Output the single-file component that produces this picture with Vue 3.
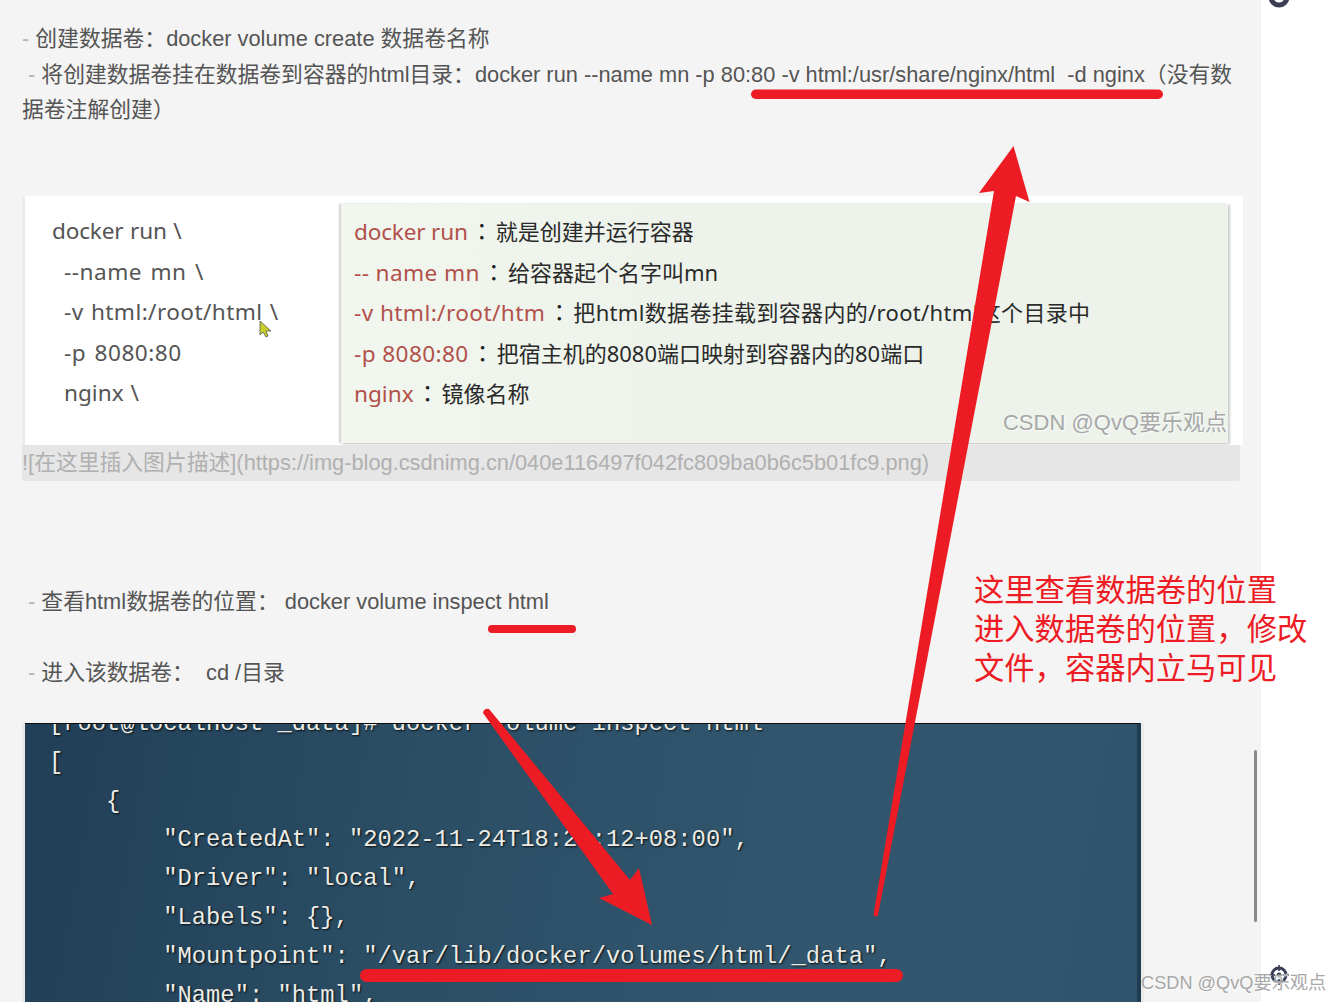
<script setup>
const terminal = [
  '[root@localhost _data]# docker volume inspect html',
  '[',
  '    {',
  '        "CreatedAt": "2022-11-24T18:24:12+08:00",',
  '        "Driver": "local",',
  '        "Labels": {},',
  '        "Mountpoint": "/var/lib/docker/volumes/html/_data",',
  '        "Name": "html",',
]
const commands = [
  { text: 'docker run \\', indent: false, tune: 'tight' },
  { text: '--name mn \\', indent: true, tune: 'loose' },
  { text: '-v html:/root/html \\', indent: true, tune: 'wide' },
  { text: '-p 8080:80', indent: true, tune: 'loose' },
  { text: 'nginx \\', indent: true, tune: '' },
]
const notes = [
  { key: 'docker run', desc: '就是创建并运行容器', tune: 'tight' },
  { key: '-- name mn', desc: '给容器起个名字叫mn', tune: 'loose' },
  { key: '-v html:/root/htm', desc: '把html数据卷挂载到容器内的/root/html这个目录中', tune: 'wide' },
  { key: '-p 8080:80', desc: '把宿主机的8080端口映射到容器内的80端口', tune: 'loose' },
  { key: 'nginx', desc: '镜像名称', tune: '' },
]
</script>

<template>
  <div class="page">
    <main class="doc">
      <p class="line first"><span class="dash">-</span> <span class="c">创建数据卷：</span>docker volume create <span class="c">数据卷名称</span></p>
      <p class="line second"><span class="dash">-</span> <span class="c">将创建数据卷挂在数据卷到容器的</span>html<span class="c">目录：</span>docker run --name mn -p 80:80 -v html:/usr/share/nginx/html&nbsp; -d nginx<span class="c">（没有数</span></p>
      <p class="line third"><span class="c">据卷注解创建）</span></p>

      <section class="shot">
        <div class="commands">
          <div v-for="c in commands" :key="c.text" class="shot-row" :class="[c.tune, { indent: c.indent }]">{{ c.text }}</div>
        </div>
        <div class="notes">
          <div v-for="n in notes" :key="n.key" class="shot-row" :class="n.tune">
            <span class="key">{{ n.key }}</span><span class="sep">：</span><span class="desc">{{ n.desc }}</span>
          </div>
          <span class="mark inner">CSDN @QvQ要乐观点</span>
        </div>
      </section>

      <p class="placeholder">![<span class="c">在这里插入图片描述</span>](https://img-blog.csdnimg.cn/040e116497f042fc809ba0b6c5b01fc9.png)</p>

      <p class="line inspect"><span class="dash">-</span> <span class="c">查看</span>html<span class="c">数据卷的位置：</span>&nbsp;docker volume inspect html</p>
      <p class="line enter"><span class="dash">-</span> <span class="c">进入该数据卷：</span>&nbsp; cd /<span class="c">目录</span></p>

      <section class="terminal">
        <div v-for="(t, i) in terminal" :key="i" class="term-row">{{ t }}</div>
      </section>
    </main>

    <div class="scrollbar"></div>

    <svg class="ink" width="1341" height="1002" viewBox="0 0 1341 1002">
      <g fill="#ed1c24">
        <rect x="751" y="89.5" width="412" height="9.5" rx="4.7" />
        <rect x="488" y="625" width="88" height="8" rx="4" />
        <rect x="360" y="969" width="543" height="13" rx="6.5" />
        <path d="M1013.5 146 L1029.5 202 L1016 196 L878 915 Q876 918 873.5 915 L994 191 L979 193 Z" />
        <path d="M483 713 Q484 708 489 709 L630 880 L639 868 L652 925 L599 898 L613 894 Z" />
      </g>
      <path d="M260 321 L260 335 L263 332 L266 337 L268 336 L266 331 L271 331 Z" fill="#c8cf2a" stroke="#555" stroke-width="0.8" />
      <g fill="none" stroke="#3a3f55">
        <circle cx="1279" cy="-3" r="8" stroke-width="5" />
        <circle cx="1279" cy="975" r="7" stroke-width="3" />
        <path d="M1279 965 V971 M1279 979 V985 M1269 975 H1275 M1283 975 H1289" stroke-width="1.6" />
      </g>
      <circle cx="1279" cy="975" r="2.4" fill="#3a3f55" />
    </svg>

    <div class="callout">
      <div>这里查看数据卷的位置</div>
      <div>进入数据卷的位置，修改</div>
      <div>文件，容器内立马可见</div>
    </div>
    <span class="mark outer">CSDN @QvQ要乐观点</span>
  </div>
</template>

<style>
html, body { margin: 0; height: 1002px; overflow: hidden; background: #fff; }
</style>

<style scoped>
.page {
  position: relative;
  width: 1341px;
  height: 1002px;
  overflow: hidden;
  background: #fff;
  font-family: "Liberation Sans", "Noto Sans CJK SC", sans-serif;
}
.doc {
  width: 1261px;
  height: 1002px;
  box-sizing: border-box;
  padding-top: 21px;
  background: #f4f4f4;
  color: #555;
  font-size: 21.8px;
  overflow: hidden;
}
p { margin: 0; }
.c { font-size: 21.8px; }
.line { height: 36px; line-height: 36px; white-space: nowrap; }
.dash { color: #b4b4b4; }
.first { padding-left: 22px; }
.second { padding-left: 28px; }
.third { padding-left: 22px; height: 34px; line-height: 34px; }

.shot {
  margin: 69px 0 0 25px;
  width: 1218px;
  height: 249px;
  box-sizing: border-box;
  background: #fff;
  display: flex;
  padding-top: 8px;
  box-shadow: -3px 0 0 #ececec;
}
.commands { width: 316px; padding: 7px 0 0 27px; box-sizing: border-box; color: #555; word-spacing: 1px; }
.notes {
  position: relative;
  width: 887px;
  height: 239px;
  box-sizing: border-box;
  padding: 7px 0 0 13px;
  background: linear-gradient(90deg, #f1f6ef 0%, #edf3ea 40%, #edf3ea 100%);
  box-shadow: -2px 0 2px rgba(0,0,0,.18), 2px 1px 2px rgba(0,0,0,.2);
}
.shot-row {
  height: 40.5px;
  line-height: 40px;
  font-family: "Noto Sans", "Noto Sans CJK SC", sans-serif;
  font-size: 22.6px;
  white-space: nowrap;
}
.wide { letter-spacing: .42px; }
.tight { letter-spacing: -.2px; }
.loose { letter-spacing: .4px; }
.commands .loose { letter-spacing: .5px; word-spacing: 2px; }
.indent { padding-left: 12px; }
.key { color: #b2514b; }
.sep {
  color: #222;
  display: inline-block;
  width: 28px;
  text-align: center;
  letter-spacing: 0;
  font-family: "Noto Sans CJK TC", sans-serif;
}
.desc { color: #2a2a2a; font-size: 22px; letter-spacing: 0; }
.notes .wide .desc { letter-spacing: .33px; }

.mark {
  position: absolute;
  color: #a8a8a8;
  font-family: "Liberation Sans", "Noto Sans CJK SC", sans-serif;
  white-space: nowrap;
  text-shadow: 1px 1px 1px rgba(255,255,255,.8);
}
.inner { right: 1px; top: 200px; font-size: 22px; }
.outer { left: 1141px; top: 968px; font-size: 18.2px; }

.placeholder {
  margin-left: 22px;
  width: 1218px;
  height: 36px;
  line-height: 36px;
  background: #e6e6e6;
  border-radius: 0 0 3px 3px;
  color: #b0b0b0;
  font-size: 21.8px;
  white-space: nowrap;
}
.inspect { margin-top: 103px; padding-left: 28px; }
.enter { margin-top: 35px; padding-left: 28px; }

.terminal {
  margin: 32px 0 0 25px;
  width: 1116px;
  height: 290px;
  box-sizing: border-box;
  overflow: hidden;
  border-top: 1px solid #0c0c0c;
  border-right: 4px solid #1f3c52;
  padding-left: 24px;
  background: linear-gradient(100deg, #213f56 0%, #2b4e65 35%, #31566e 70%, #2f546b 100%);
  box-shadow: -3px 0 0 #e8e8e8, 3px 0 0 #ebebeb;
}
.term-row {
  height: 38.8px;
  line-height: 38.8px;
  font-family: "Liberation Mono", monospace;
  font-size: 23.8px;
  color: #ecece6;
  white-space: pre;
  text-shadow: 1px 1px 2px rgba(0,0,0,.85);
}
.term-row:first-child { margin-top: -19px; }

.scrollbar {
  position: absolute;
  left: 1254px;
  top: 750px;
  width: 3px;
  height: 172px;
  border-radius: 2px;
  background: #8a8a8a;
}
.ink { position: absolute; left: 0; top: 0; pointer-events: none; }
.callout {
  position: absolute;
  left: 974px;
  top: 569px;
  color: #ed1c24;
  font-family: "Noto Sans CJK SC", sans-serif;
  font-size: 30.3px;
  line-height: 39px;
  white-space: nowrap;
}
</style>
